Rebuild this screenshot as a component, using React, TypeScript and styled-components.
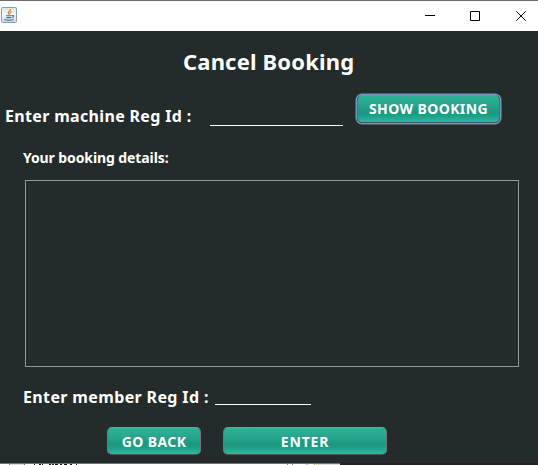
import React from "react";
import styled, { createGlobalStyle } from "styled-components";

const GlobalStyle = createGlobalStyle`
  * { box-sizing: border-box; }
  html, body { margin: 0; padding: 0; overflow: hidden; background: #232b2b; }
`;

const Window = styled.div`
  width: 538px;
  height: 465px;
  display: flex;
  flex-direction: column;
  overflow: hidden;
  background: #232b2b;
  color: #fff;
  font-family: "Noto Sans", "DejaVu Sans", sans-serif;
  font-weight: 700;
`;

const TitleBar = styled.header`
  display: flex;
  justify-content: space-between;
  flex: none;
  height: 31px;
  background: #fff;
  border-top: 1px solid #6b6b6b;
`;

const AppIcon = styled.svg`
  display: block;
  margin: 6px 0 0 1px;
`;

const Controls = styled.div`
  display: flex;
  height: 29px;
  margin-right: -6px;
`;

const Control = styled.span<{ $width?: number }>`
  width: ${(p) => p.$width ?? 46}px;
  display: flex;
  align-items: center;
  justify-content: center;
`;

const Content = styled.main`
  display: flex;
  flex-direction: column;
  flex: none;
  height: 432px;
`;

const Heading = styled.h1`
  margin: 15px 0 0 183px;
  font-size: 22px;
  line-height: 30px;
  font-weight: 700;
  letter-spacing: 0.17px;
  white-space: nowrap;
`;

const Row = styled.div<{ $top: number; $left: number; $height: number }>`
  display: flex;
  flex: none;
  margin-top: ${(p) => p.$top}px;
  padding-left: ${(p) => p.$left}px;
  height: ${(p) => p.$height}px;
`;

const Label = styled.label<{ $size: number; $width: number; $top?: number; $spacing?: number }>`
  flex: none;
  width: ${(p) => p.$width}px;
  margin-top: ${(p) => p.$top ?? 0}px;
  font-size: ${(p) => p.$size}px;
  line-height: 22px;
  letter-spacing: ${(p) => p.$spacing ?? 0}px;
  white-space: nowrap;
`;

const Field = styled.input<{ $width: number; $height: number }>`
  flex: none;
  width: ${(p) => p.$width}px;
  height: ${(p) => p.$height}px;
  padding: 0;
  border: 0;
  border-bottom: 1px solid #fff;
  border-radius: 0;
  outline: 0;
  background: transparent;
  color: #fff;
`;

const Button = styled.button<{ $width: number; $left?: number; $spacing?: number; $focused?: boolean }>`
  flex: none;
  width: ${(p) => p.$width}px;
  height: 28px;
  margin: 0 0 0 ${(p) => p.$left ?? 0}px;
  padding: ${(p) => (p.$focused ? "0 0 1px" : "1px 0 0")};
  border: 1px solid ${(p) => (p.$focused ? "#56696d" : "#727779")};
  border-top-color: ${(p) => (p.$focused ? "#7c9299" : "#8c9192")};
  border-bottom-color: #4d5557;
  border-radius: 5px;
  box-shadow: ${(p) => (p.$focused ? "0 0 0 1.5px #7198c4" : "none")};
  background: linear-gradient(#2cb398 0%, #26a68d 35%, #1e967e 64%, #20a088 78%, #2bbba1 100%);
  color: #fff;
  font: 700 14px/20px "Noto Sans", "DejaVu Sans", sans-serif;
  letter-spacing: ${(p) => p.$spacing ?? 0}px;
  white-space: nowrap;
`;

const Details = styled.section`
  flex: none;
  width: 494px;
  height: 187px;
  margin: 11px 0 0 25px;
  border: 1px solid #92969c;
`;

const Backdrop = styled.footer`
  display: flex;
  flex: none;
  height: 2px;
`;

const Strip = styled.svg`
  display: block;
`;

const fragments: [number, number, string][] = [
  [0, 9, "#fff"], [9, 1, "#888"], [10, 14, "#ddd"], [24, 1, "#777"],
  [34, 1, "#341044"], [39, 2, "#26133c"], [42, 1, "#301030"],
  [49, 2, "#241034"], [52, 2, "#16253c"], [55, 3, "#231321"],
  [60, 2, "#111b30"], [64, 3, "#201020"], [70, 2, "#17152a"], [76, 1, "#30104c"],
  [287, 1, "#888"], [292, 1, "#888"], [305, 4, "#d4d5f0"],
  [314, 1, "#e6a02b"], [316, 24, "#ddd"],
];

export default function App() {
  return (
    <>
      <GlobalStyle />
      <Window>
        <TitleBar>
          <AppIcon width="16" height="16" viewBox="0 0 16 16" fill="none">
            <defs>
              <linearGradient id="tile" x1="0" y1="0" x2="0" y2="1">
                <stop stopColor="#dbe4ea" />
                <stop offset=".45" stopColor="#fafafa" />
                <stop offset="1" stopColor="#c6d6df" />
              </linearGradient>
            </defs>
            <rect x=".5" y=".5" width="15" height="15" rx="1" fill="url(#tile)" stroke="#83a0b3" />
            <path d="M9.7 2c.3 1.9-3.5 2.2-2.4 4.4L8.5 8M10.6 4.5C8.4 5.3 8.6 6 9.3 7" stroke="#e27a24" strokeWidth="1.1" />
            <path d="M5 8.7h5.8M5.5 10.6h4.8M3.3 12.5c2.4 1 7.5.9 9.2-.1M11 8.8c2.2-1 2.5 1.1.2 1.8" stroke="#457391" strokeWidth="1.05" />
          </AppIcon>
          <Controls>
            <Control $width={44} aria-label="Minimize">
              <svg width="10" height="10" viewBox="0 0 10 10"><path d="M0 4.5h10" stroke="#000" /></svg>
            </Control>
            <Control aria-label="Maximize">
              <svg width="10" height="10" viewBox="0 0 10 10"><path d="M.5.5h9v9h-9z" fill="none" stroke="#000" /></svg>
            </Control>
            <Control aria-label="Close">
              <svg width="10" height="10" viewBox="0 0 10 10"><path d="m.2.2 9.6 9.6m0-9.6L.2 9.8" stroke="#000" /></svg>
            </Control>
          </Controls>
        </TitleBar>
        <Content>
          <Heading>Cancel Booking</Heading>
          <Row $top={19} $left={5} $height={31}>
            <Label htmlFor="machine" $size={16} $width={205} $top={10} $spacing={0.33}>Enter machine Reg Id :</Label>
            <Field id="machine" $width={133} $height={31} />
            <Button $width={143} $left={14} $spacing={0.4} $focused>SHOW BOOKING</Button>
          </Row>
          <Row $top={21} $left={23} $height={22}>
            <Label as="span" $size={14} $width={160} $spacing={-0.1}>Your booking details:</Label>
          </Row>
          <Details aria-label="Booking details" />
          <Row $top={13} $left={23} $height={25}>
            <Label htmlFor="member" $size={16} $width={192} $top={6} $spacing={0.36}>Enter member Reg Id :</Label>
            <Field id="member" $width={96} $height={25} />
          </Row>
          <Row $top={22} $left={107} $height={28}>
            <Button $width={94} $spacing={0.4}>GO BACK</Button>
            <Button $width={164} $left={22} $spacing={0.8}>ENTER</Button>
          </Row>
        </Content>
        <Backdrop>
          <Strip width="538" height="2" viewBox="0 0 538 2" shapeRendering="crispEdges">
            <path d="M0 0h340v1H0z" fill="#737373" />
            <path d="M0 1h340v1H0z" fill="#fff" />
            <path d="M340 0h198v2H340z" fill="#231f24" />
            {fragments.map(([x, width, fill]) => (
              <rect key={x} x={x} y="1" width={width} height="1" fill={fill} />
            ))}
          </Strip>
        </Backdrop>
      </Window>
    </>
  );
}
